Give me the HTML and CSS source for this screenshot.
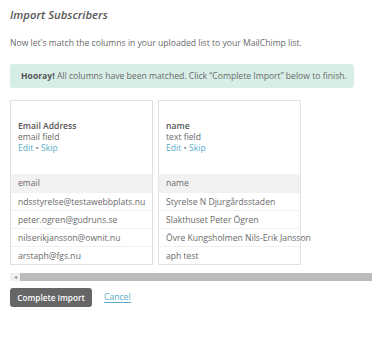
FILE: index.html
```html
<!DOCTYPE html>
<html lang="en">
<head>
  <meta charset="UTF-8">
  <title>Import Subscribers</title>
  <link rel="stylesheet" href="styles.css">
</head>
<body>
  <div class="page">
    <h1>Import Subscribers</h1>

    <p class="intro">Now let's match the columns in your uploaded list to your MailChimp list.</p>

    <div class="notice"><strong>Hooray!</strong> All columns have been matched. Click “Complete Import” below to finish.</div>

    <div class="columns">
      <div class="column">
        <div class="column-head">
          <div class="field-name">Email Address</div>
          <div class="field-type">email field</div>
          <div class="field-actions"><a href="#">Edit</a> • <a href="#">Skip</a></div>
        </div>
        <div class="row label-row">email</div>
        <div class="row">ndsstyrelse@testawebbplats.nu</div>
        <div class="row">peter.ogren@gudruns.se</div>
        <div class="row">nilserikjansson@ownit.nu</div>
        <div class="row">arstaph@fgs.nu</div>
      </div>

      <div class="column">
        <div class="column-head">
          <div class="field-name">name</div>
          <div class="field-type">text field</div>
          <div class="field-actions"><a href="#">Edit</a> • <a href="#">Skip</a></div>
        </div>
        <div class="row label-row">name</div>
        <div class="row">Styrelse N Djurgårdsstaden</div>
        <div class="row">Slakthuset Peter Ögren</div>
        <div class="row">Övre Kungsholmen Nils-Erik Jansson</div>
        <div class="row">aph test</div>
      </div>
    </div>

    <div class="scrollbar">
      <div class="scroll-arrow">◂</div>
      <div class="scroll-thumb"></div>
    </div>

    <div class="actions">
      <button class="btn">Complete Import</button>
      <a href="#" class="cancel">Cancel</a>
    </div>
  </div>
</body>
</html>
```

FILE: styles.css
```css
body {
  font-family: 'Open Sans', sans-serif;
  margin: 0;
  background: #fff;
  color: #6a6a6a;
  font-size: 8.6px;
}

.page {
  padding: 7px 0 0 10px;
}

h1 {
  font-size: 11.3px;
  font-style: italic;
  font-weight: 600;
  color: #555;
  margin: 0;
  line-height: 16px;
}

.intro {
  margin: 14px 0 0;
  line-height: 12px;
}

.notice {
  margin: 15px 18px 0 0;
  background: #d7eee7;
  border-radius: 3px;
  padding: 6px 11px;
  line-height: 12px;
  white-space: nowrap;
}

.notice strong {
  color: #555;
}

.columns {
  display: flex;
  gap: 5px;
  margin-top: 12px;
}

.column {
  width: 141px;
  border: 1px solid #e1e1e1;
}

.column-head {
  height: 73px;
  padding: 0 7px;
  display: flex;
  flex-direction: column;
  justify-content: center;
  line-height: 11px;
}

.field-name {
  font-weight: 600;
  color: #555;
}

.field-actions {
  color: #888;
}

.field-actions a {
  color: #5aaccc;
  text-decoration: none;
}

.row {
  height: 18px;
  line-height: 18px;
  padding: 0 7px;
  border-top: 1px solid #f0f0f0;
  box-sizing: border-box;
  white-space: nowrap;
}

.label-row {
  background: #f2f2f2;
  border-top: none;
}

.scrollbar {
  display: flex;
  height: 8px;
  margin-top: 8px;
}

.scroll-arrow {
  width: 10px;
  background: #f0f0f0;
  color: #888;
  font-size: 6px;
  line-height: 8px;
  text-align: center;
}

.scroll-thumb {
  flex: 1;
  background: #bbb;
}

.actions {
  display: flex;
  align-items: center;
  gap: 12px;
  margin-top: 7px;
}

.btn {
  background: #666;
  color: #fff;
  border: none;
  border-radius: 3px;
  font-family: 'Open Sans', sans-serif;
  font-weight: 600;
  font-size: 8.2px;
  padding: 0;
  width: 82px;
  height: 19px;
  white-space: nowrap;
}

.cancel {
  color: #5aaccc;
  text-decoration: none;
  border-bottom: 1px solid #5aaccc;
  line-height: 10px;
}
```
